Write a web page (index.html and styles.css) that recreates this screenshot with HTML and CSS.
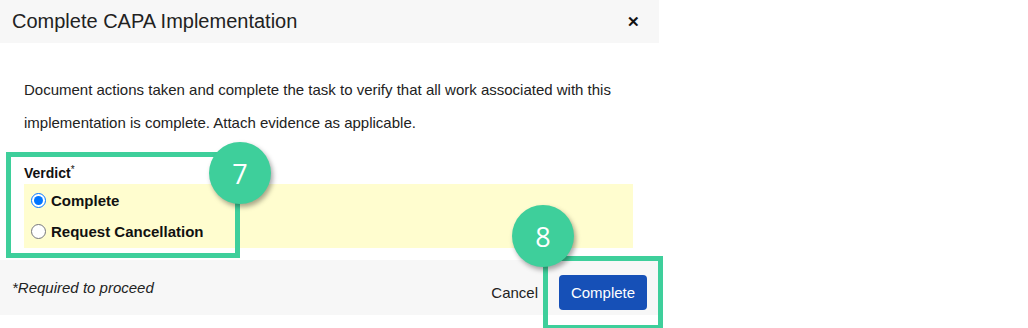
FILE: index.html
```html
<!DOCTYPE html>
<html>
<head>
<meta charset="utf-8">
<link rel="stylesheet" href="styles.css">
</head>
<body>
<div class="page">
  <div class="dialog">
    <div class="header">
      <span class="title">Complete CAPA Implementation</span>
      <span class="close">&#x2715;</span>
    </div>
    <div class="body">
      <p class="desc">Document actions taken and complete the task to verify that all work associated with this implementation is complete. Attach evidence as applicable.</p>
      <div class="verdict-label">Verdict<span class="star">*</span></div>
      <div class="options">
        <label class="opt"><input type="radio" name="v" checked> Complete</label>
        <label class="opt"><input type="radio" name="v"> Request Cancellation</label>
      </div>
    </div>
    <div class="footer">
      <span class="required">*Required to proceed</span>
      <div class="actions">
        <span class="cancel">Cancel</span>
        <button class="primary">Complete</button>
      </div>
    </div>
  </div>
  <div class="hl hl-verdict"></div>
  <div class="hl hl-button"></div>
  <div class="badge badge-7">7</div>
  <div class="badge badge-8">8</div>
</div>
</body>
</html>
```
FILE: styles.css
```css
html, body {
  margin: 0;
  padding: 0;
  background: #ffffff;
}
body {
  font-family: "Liberation Sans", Arial, sans-serif;
  color: #1e1e1e;
}
.page {
  position: relative;
  width: 1028px;
  height: 328px;
  overflow: hidden;
}
.dialog {
  width: 659px;
  background: #ffffff;
}
.header {
  height: 43px;
  background: #f7f7f7;
  display: flex;
  align-items: center;
  justify-content: space-between;
  padding: 0 19px 0 12px;
}
.title {
  font-size: 20px;
  color: #222;
}
.close {
  font-size: 15px;
  font-weight: bold;
  color: #111;
}
.body {
  padding: 30px 26px 12px 24px;
}
.desc {
  margin: 0;
  font-size: 15px;
  line-height: 33px;
  color: #222;
}
.verdict-label {
  margin-top: 25px;
  font-size: 14px;
  font-weight: bold;
  line-height: 18px;
  color: #111;
}
.star {
  font-size: 10px;
  vertical-align: top;
  font-weight: normal;
  line-height: 12px;
}
.options {
  margin-top: 2px;
  background: #fffdcf;
  padding: 1px 0;
  display: flex;
  flex-direction: column;
}
.opt {
  display: flex;
  align-items: center;
  height: 31px;
  font-size: 15px;
  font-weight: bold;
  color: #111;
}
.opt input {
  margin: 0 5px 0 7px;
  width: 15px;
  height: 15px;
}
.footer {
  height: 55px;
  background: #f7f7f7;
  display: flex;
  align-items: center;
  justify-content: space-between;
  padding: 0 12px;
}
.required {
  font-style: italic;
  font-size: 15px;
  color: #222;
  padding-top: 0;
}
.actions {
  display: flex;
  align-items: center;
  gap: 21px;
  padding-top: 10px;
}
.cancel {
  font-size: 15px;
  color: #222;
}
.primary {
  width: 88px;
  height: 35px;
  border: none;
  border-radius: 4px;
  background: #1650b7;
  color: #fff;
  font-family: "Liberation Sans", Arial, sans-serif;
  font-size: 15px;
  padding: 0;
}
.hl {
  position: absolute;
  border: 5px solid #3ecf9b;
  box-sizing: border-box;
}
.hl-verdict {
  left: 6px;
  top: 152px;
  width: 234px;
  height: 106px;
}
.hl-button {
  left: 543px;
  top: 256px;
  width: 120px;
  height: 74px;
}
.badge {
  position: absolute;
  width: 62px;
  height: 62px;
  border-radius: 50%;
  background: #3ecf9b;
  color: #fff;
  font-family: "Open Sans", "Liberation Sans", sans-serif;
  font-size: 27px;
  display: flex;
  align-items: center;
  justify-content: center;
  box-shadow: 2px 3px 5px rgba(0,0,0,0.35);
}
.badge-7 {
  left: 209px;
  top: 142px;
}
.badge-8 {
  left: 512px;
  top: 205px;
}
```
